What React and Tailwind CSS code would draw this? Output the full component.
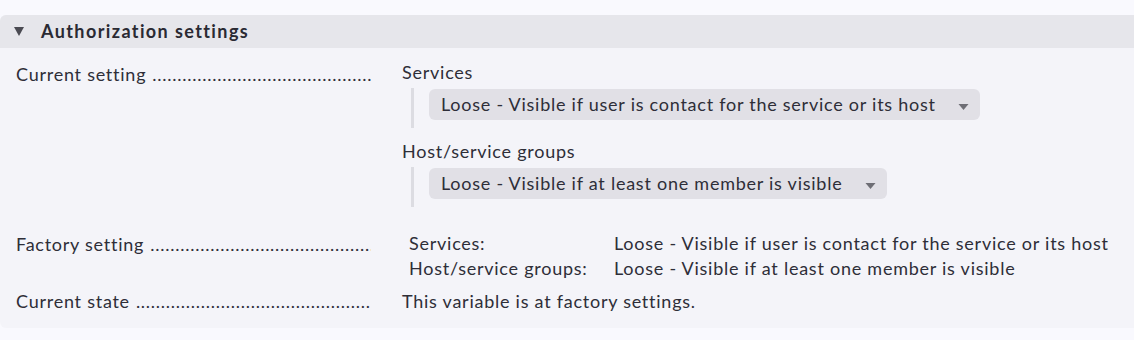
import React from "react";

const DOTS = ".".repeat(200);

function Label({ children }) {
  return (
    <div className="w-[371px] flex shrink-0 pl-4 overflow-hidden whitespace-nowrap">
      <span className="shrink-0">{children}</span>
      <span className="ml-[6px] overflow-hidden flex-1">{DOTS}</span>
    </div>
  );
}

function Select({ text, width }) {
  return (
    <div className="flex">
      <div className="w-[3px] bg-[#dcdce2] ml-[9px] h-[40px]" />
      <div
        className={`ml-[15px] mt-[1px] h-[31px] rounded-[6px] bg-[#e1e0e6] flex items-center pl-3 pr-[11px] ${width}`}
      >
        <span className="flex-1 whitespace-nowrap">{text}</span>
        <svg width="11" height="7" viewBox="0 0 11 7" className="mt-[5px]">
          <path d="M0.5 0 H10.5 L5.5 6 Z" fill="#6e6e75" />
        </svg>
      </div>
    </div>
  );
}

export default function App() {
  return (
    <div
      className="w-[1134px] h-[340px] bg-[#f9f9fe] pt-[15px] text-[#2e2e38] text-[18px] tracking-[0.75px] overflow-hidden"
      style={{ fontFamily: "Lato, 'Noto Sans', sans-serif" }}
    >
      <div className="bg-[#f4f4f9] rounded-l-[6px] h-[313px]">
        <div className="h-[33px] bg-[#e6e6eb] rounded-tl-[6px] flex items-center">
          <svg width="10" height="9" viewBox="0 0 10 9" className="ml-[14px]">
            <path d="M0 0 H10 L5 9 Z" fill="#4a4a52" />
          </svg>
          <span className="ml-[17px] font-bold tracking-[1.4px] text-[#2a2a33]">
            Authorization settings
          </span>
        </div>

        <div className="flex pt-[13px]">
          <Label>Current setting</Label>
          <div className="ml-[31px] flex flex-col">
            <div className="leading-[22px]">Services</div>
            <div className="mt-[5px]">
              <Select
                text="Loose - Visible if user is contact for the service or its host"
                width="w-[551px]"
              />
            </div>
            <div className="leading-[22px] mt-[12px]">Host/service groups</div>
            <div className="mt-[5px]">
              <Select
                text="Loose - Visible if at least one member is visible"
                width="w-[458px]"
              />
            </div>
          </div>
        </div>

        <div className="flex mt-[24px]">
          <Label>Factory setting</Label>
          <div className="ml-[38px] grid grid-cols-[205px_auto] leading-[25px]">
            <span>Services:</span>
            <span>Loose - Visible if user is contact for the service or its host</span>
            <span>Host/service groups:</span>
            <span>Loose - Visible if at least one member is visible</span>
          </div>
        </div>

        <div className="flex mt-[9px] leading-[22px]">
          <Label>Current state</Label>
          <div className="ml-[31px]">This variable is at factory settings.</div>
        </div>
      </div>
    </div>
  );
}
